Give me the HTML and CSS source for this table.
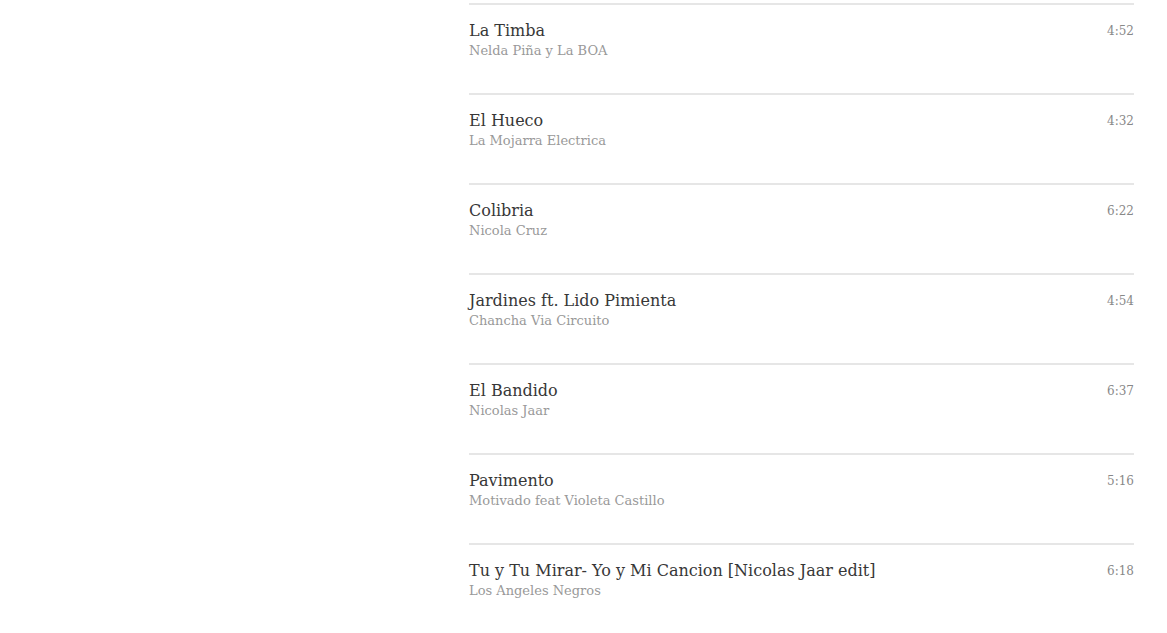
FILE: index.html
```html
<!DOCTYPE html>
<html>
<head>
<meta charset="utf-8">
<link rel="stylesheet" href="styles.css">
</head>
<body>
<ul class="tracks">
  <li class="track"><div class="info"><div class="title">La Timba</div><div class="artist">Nelda Piña y La BOA</div></div><div class="time">4:52</div></li>
  <li class="track"><div class="info"><div class="title">El Hueco</div><div class="artist">La Mojarra Electrica</div></div><div class="time">4:32</div></li>
  <li class="track"><div class="info"><div class="title">Colibria</div><div class="artist">Nicola Cruz</div></div><div class="time">6:22</div></li>
  <li class="track"><div class="info"><div class="title">Jardines ft. Lido Pimienta</div><div class="artist">Chancha Via Circuito</div></div><div class="time">4:54</div></li>
  <li class="track"><div class="info"><div class="title">El Bandido</div><div class="artist">Nicolas Jaar</div></div><div class="time">6:37</div></li>
  <li class="track"><div class="info"><div class="title">Pavimento</div><div class="artist">Motivado feat Violeta Castillo</div></div><div class="time">5:16</div></li>
  <li class="track"><div class="info"><div class="title">Tu y Tu Mirar- Yo y Mi Cancion [Nicolas Jaar edit]</div><div class="artist">Los Angeles Negros</div></div><div class="time">6:18</div></li>
</ul>
</body>
</html>
```
FILE: styles.css
```css
html, body {
  margin: 0;
  padding: 0;
  background: #fff;
}
body {
  font-family: "DejaVu Serif", "Liberation Serif", serif;
}
.tracks {
  list-style: none;
  margin: 3px 0 0 469px;
  padding: 0;
  width: 665px;
}
.track {
  display: flex;
  justify-content: space-between;
  align-items: flex-start;
  height: 90px;
  box-sizing: border-box;
  border-top: 2px solid #e6e6e6;
  padding-top: 15px;
}
.title {
  font-size: 16px;
  line-height: 22px;
  color: #373737;
}
.artist {
  font-size: 13px;
  line-height: 18px;
  color: #999;
}
.time {
  font-size: 12px;
  line-height: 18px;
  color: #888;
  padding-top: 2px;
}
```
